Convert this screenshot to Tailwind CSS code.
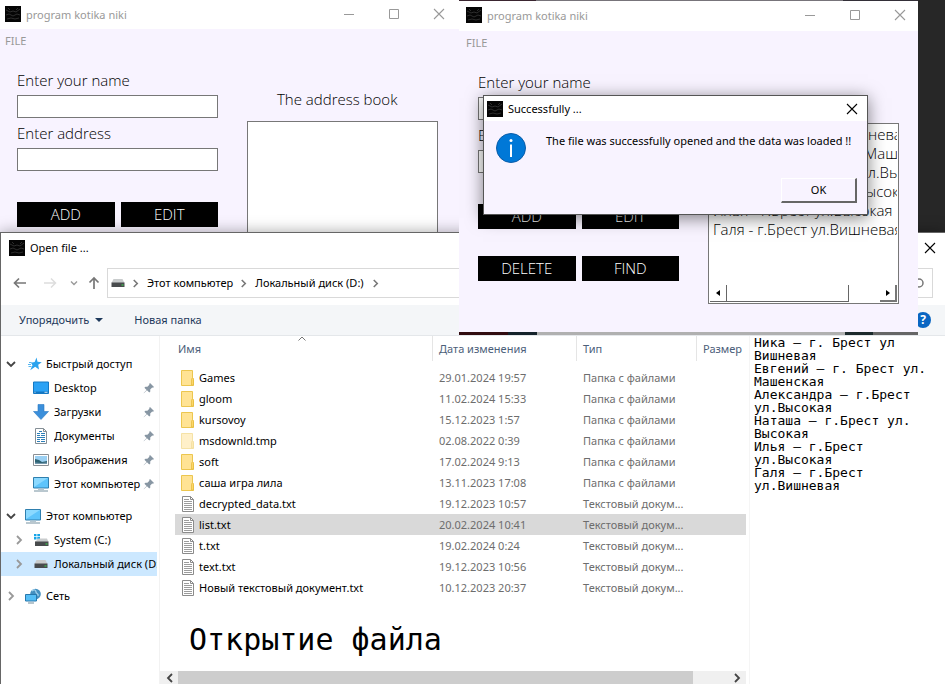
<!DOCTYPE html>
<html lang="ru">
<head>
<meta charset="utf-8">
<title>program kotika niki</title>
<script src="https://cdn.jsdelivr.net/npm/@tailwindcss/browser@4"></script>
</head>
<body class="font-['Noto_Sans','Open_Sans',sans-serif] text-[11px] leading-[16px] text-black">
<svg class="hidden">
  <symbol id="app" viewBox="0 0 16 16"><path fill="#050505" d="M0 0h16v16H0z"/><path d="M1 4l4 2 3-1 3 1 4-3M1 9l3-1 4 2 4-2 3 1M2 13l4-1 4 1 4-1M3 2l2 2m8-2l-2 2" stroke="#2e2e2e" fill="none"/></symbol>
  <symbol id="close" viewBox="0 0 12 12"><path d="M1 1l10 10M11 1L1 11" stroke="currentColor" stroke-width="1.1" fill="none"/></symbol>
  <symbol id="max" viewBox="0 0 12 12"><path d="M1.500 1.500h9v9h-9z" stroke="currentColor" fill="none"/></symbol>
  <symbol id="min" viewBox="0 0 12 12"><path d="M1 6.500h10" stroke="currentColor" fill="none"/></symbol>
  <symbol id="folder" viewBox="0 0 14 16"><path d="M.5.5h11v7l1 2v6h-12z" fill="#ffe394" stroke="#ecc64f"/><path d="M10.500 9.500c0-2 2-2 2 0v5.500h-2z" fill="#fdd768" stroke="#e3b93c" stroke-width=".7"/></symbol>
  <symbol id="doc" viewBox="0 0 14 16"><path d="M1.500.5h8l3 3v12h-11z" fill="#fff" stroke="#8b8b8b"/><path d="M9.500.5v3h3" fill="none" stroke="#8b8b8b"/><path d="M3 3.500h5M3 5.500h8M3 7.500h8M3 9.500h8M3 11.500h8M3 13.500h8" stroke="#9c9c9c"/></symbol>
  <symbol id="pin" viewBox="0 0 12 12"><path d="M7 1l4 4-1 .8-.8-.2-2 2 .1 2-1 1-2.300-2.300L.8 11.200.7 11 3.600 7.900 1.400 5.700l1-1 2 .1 2-2-.2-.8z" fill="#8796a3"/></symbol>
  <symbol id="right" viewBox="0 0 8 10"><path d="M2 1l4 4-4 4" stroke="currentColor" stroke-width="1.800" fill="none"/></symbol>
  <symbol id="down" viewBox="0 0 10 8"><path d="M1 2l4 4 4-4" stroke="currentColor" stroke-width="1.800" fill="none"/></symbol>
  <symbol id="star" viewBox="0 0 14 14"><path d="M8.500.5l1 4.200 4.300.5-3.600 2.500.8 4.800-3.800-2.800-5 3.600 2.300-5L3 5.800l3.700-.7z" fill="#2aa3ee"/><path d="M0 7.500h3M.5 9.500h3M1 5.500h2.500" stroke="#2aa3ee" stroke-width=".8"/></symbol>
  <symbol id="desk" viewBox="0 0 16 14"><path d="M.5 1h15v11.500H.5z" fill="#2ba2f5" stroke="#1479c4"/><path d="M1 10.500h14v1.500H1z" fill="#1276c2"/><path d="M1.500 11.300h1m9 0h3" stroke="#fff" stroke-width=".8"/></symbol>
  <symbol id="load" viewBox="0 0 16 16"><path d="M5 .5h6v7h4.500L8 15.500.5 7.500H5z" fill="#3b8fdb" stroke="#2a78c2" stroke-width=".6"/></symbol>
  <symbol id="docs" viewBox="0 0 14 16"><path d="M1.500.5h8l3 3v12h-11z" fill="#fff" stroke="#858f96"/><path d="M9.500.5v3h3" fill="none" stroke="#858f96"/><path d="M3 5.500h3m1 0h4M3 7.500h3m1 0h4M3 9.500h8M3 11.500h3m1 0h4M3 13.500h3m1 0h4M5 3.500h3" stroke="#2d7fb8"/></symbol>
  <symbol id="pics" viewBox="0 0 16 12"><path d="M.5.5h15v11H.5z" fill="#fff" stroke="#8b8f94"/><path d="M2 2h12v8H2z" fill="#9bd0f3"/><path d="M2 5l4 1 3 2 5-1v3H2z" fill="#2e6374"/><path d="M2 8.500l6 .5 6-.5V10H2z" fill="#7599ad"/></symbol>
  <symbol id="pc" viewBox="0 0 16 15"><path d="M.5.5h15v10.500H.5z" fill="#5ec4fb" stroke="#2f7fae"/><path d="M1 1h14L1 10z" fill="#8bd9ff"/><path d="M5 11.500h6v1.500H5z" fill="#b4c6d0"/><path d="M1 14h14" stroke="#75909f"/></symbol>
  <symbol id="disk" viewBox="0 0 14 10"><path d="M2.500 1h9l2 4H.5z" fill="#c9cccd"/><path d="M.5 4.500h13V9H.5z" fill="#484b4d"/><path d="M10.500 6.500h2v1h-2z" fill="#39e04c"/></symbol>
  <symbol id="sys" viewBox="0 0 16 14"><path d="M1 1h2.500v2.300H1zM4.300 1H7v2.300H4.300zM1 4h2.500v2.400H1zM4.300 4H7v2.400H4.300z" fill="#15a4e8"/><path d="M4 7l1-1.500h9L15.500 9H2z" fill="#c9cccd"/><path d="M2 8.500h13.500V13H2z" fill="#484b4d"/><path d="M12.500 10.500h2v1h-2z" fill="#39e04c"/></symbol>
  <symbol id="net" viewBox="0 0 16 16"><circle cx="10.500" cy="6" r="5.300" fill="#4590c0"/><path d="M7 3c2-2 4-1 4 1s3 1 2 4" stroke="#a5d4ee" fill="none" stroke-width="1.300"/><path d="M.5 6.500h11v6.500H.5z" fill="#55bef6" stroke="#2878ad"/><path d="M3 15h6" stroke="#6f8b9b"/></symbol>
</svg>

<main class="relative min-h-screen w-full overflow-hidden bg-[#272727]">

  <!-- Address book window, empty -->
  <section class="absolute left-0 top-0 w-[459px] h-[333px] bg-[#f8f3ff]">
    <header class="flex items-center h-[29px] pl-[5px] pr-[14px] bg-white text-[#999]">
      <svg class="size-4 mb-[2px]"><use href="#app"/></svg>
      <h1 class="pl-[5px] flex-1">program kotika niki</h1>
      <div class="flex gap-[33px] mb-[2px]">
        <button aria-label="Minimize"><svg class="size-3"><use href="#min"/></svg></button>
        <button aria-label="Maximize"><svg class="size-3"><use href="#max"/></svg></button>
        <button aria-label="Close"><svg class="size-3"><use href="#close"/></svg></button>
      </div>
    </header>
    <nav class="flex h-6 items-center px-[5px] text-[#999]"><button>FILE</button></nav>
    <div class="flex justify-between pl-[17px] pr-[21px] pt-3 font-['Open_Sans','Noto_Sans',sans-serif] font-light text-[15px] leading-[30px]">
      <form class="w-[201px] flex flex-col">
        <label for="n1">Enter your name</label>
        <input id="n1" class="h-[23px] w-full border border-[#777] bg-white px-1 text-[12px]">
        <label for="a1">Enter address</label>
        <input id="a1" class="h-[23px] w-full border border-[#777] bg-white px-1 text-[12px]">
        <div class="grid grid-cols-2 gap-x-[6px] gap-y-[27px] pt-[31px] text-white leading-[25px]">
          <button type="button" class="bg-black h-[25px]">ADD</button>
          <button type="button" class="bg-black h-[25px]">EDIT</button>
        </div>
      </form>
      <div class="w-[191px] pt-[19px]">
        <h2 class="pl-[30px] h-[37px]">The address book</h2>
        <div class="h-[181px] border border-[#777] bg-white"></div>
      </div>
    </div>
  </section>

  <!-- Open file dialog -->
  <section class="absolute inset-x-0 top-[232px] bottom-0 flex flex-col border-t border-l border-[#666] bg-white shadow-[0_0_14px_rgba(0,0,0,0.35)]">
    <header class="flex items-center h-[35px] pl-2 pr-[9px] pb-[6px]">
      <svg class="size-4"><use href="#app"/></svg>
      <h2 class="pl-[5px] flex-1">Open file ...</h2>
      <button aria-label="Close"><svg class="size-3"><use href="#close"/></svg></button>
    </header>
    <div class="flex items-center h-[30px] pl-3 pr-3">
      <button aria-label="Back"><svg class="w-[14px] h-3" viewBox="0 0 14 12"><path d="M13 6H1.500M6 1.500L1.500 6 6 10.500" stroke="#777" stroke-width="1.700" fill="none"/></svg></button>
      <button aria-label="Forward" class="ml-4"><svg class="w-[14px] h-3" viewBox="0 0 14 12"><path d="M1 6h11M8 1.500L12.500 6 8 10.500" stroke="#ddd" stroke-width="1.500" fill="none"/></svg></button>
      <button aria-label="Recent" class="ml-[13px] text-[#999]"><svg class="w-2 h-[6px]"><use href="#down"/></svg></button>
      <button aria-label="Up" class="ml-[10px]"><svg class="w-3 h-[14px]" viewBox="0 0 12 14"><path d="M6 13V2M1.500 6.500L6 2l4.500 4.500" stroke="#777" stroke-width="1.700" fill="none"/></svg></button>
      <div class="ml-[7px] flex flex-1 h-[30px] items-center border border-[#d9d9d9] pl-[3px]">
        <svg class="w-[14px] h-[10px]"><use href="#disk"/></svg>
        <svg class="w-[7px] h-[9px] ml-[7px] text-[#777]"><use href="#right"/></svg>
        <a href="#" class="ml-2">Этот компьютер</a>
        <svg class="w-[7px] h-[9px] ml-[7px] text-[#777]"><use href="#right"/></svg>
        <a href="#" class="ml-2">Локальный диск (D:)</a>
        <svg class="w-[7px] h-[9px] ml-2 text-[#777]"><use href="#right"/></svg>
        <svg class="ml-auto mr-2 size-[13px]" viewBox="0 0 13 13"><circle cx="8" cy="6" r="4" stroke="#777" stroke-width="1.500" fill="none"/><path d="M5 9l-4 4" stroke="#777" stroke-width="1.500"/></svg>
      </div>
    </div>
    <div class="mt-[7px] flex h-[31px] items-center gap-[31px] border-b border-[#e4e7ea] bg-[#f4f6f8] pl-[18px] pr-[14px] text-[#1e395b]">
      <button class="flex items-center gap-[6px]">Упорядочить <svg class="w-2 h-1" viewBox="0 0 8 4"><path d="M0 0h8L4 4z" fill="#1e395b"/></svg></button>
      <button>Новая папка</button>
      <button aria-label="Help" class="ml-auto size-4 rounded-full bg-[#0a66c2] text-white font-bold text-[12px] leading-[16px]">?</button>
    </div>

    <div class="flex flex-1">
      <nav class="w-[159px] border-r border-[#f2f2f2] pt-4">
        <ul class="pr-[2px] [&_a]:flex [&_a]:h-6 [&_a]:items-center [&_a]:whitespace-nowrap">
          <li><a href="#" class="pl-[5px]"><svg class="w-[10px] h-2 text-[#444] shrink-0"><use href="#down"/></svg><svg class="ml-3 size-[14px] shrink-0"><use href="#star"/></svg><span class="ml-1">Быстрый доступ</span></a></li>
          <li><a href="#" class="pl-8"><svg class="w-4 h-[14px] shrink-0"><use href="#desk"/></svg><span class="ml-[5px] w-[88px] overflow-hidden">Desktop</span><svg class="ml-px size-3 shrink-0"><use href="#pin"/></svg></a></li>
          <li><a href="#" class="pl-8"><svg class="size-4 shrink-0"><use href="#load"/></svg><span class="ml-[5px] w-[88px] overflow-hidden">Загрузки</span><svg class="ml-px size-3 shrink-0"><use href="#pin"/></svg></a></li>
          <li><a href="#" class="pl-8"><svg class="w-4 h-4 shrink-0"><use href="#docs"/></svg><span class="ml-[5px] w-[88px] overflow-hidden">Документы</span><svg class="ml-px size-3 shrink-0"><use href="#pin"/></svg></a></li>
          <li><a href="#" class="pl-8"><svg class="w-4 h-3 shrink-0"><use href="#pics"/></svg><span class="ml-[5px] w-[88px] overflow-hidden">Изображения</span><svg class="ml-px size-3 shrink-0"><use href="#pin"/></svg></a></li>
          <li><a href="#" class="pl-8"><svg class="w-4 h-[15px] shrink-0"><use href="#pc"/></svg><span class="ml-[5px] w-[88px] overflow-hidden">Этот компьютер</span><svg class="ml-px size-3 shrink-0"><use href="#pin"/></svg></a></li>
          <li class="pt-2"><a href="#" class="pl-[5px]"><svg class="w-[10px] h-2 text-[#444] shrink-0"><use href="#down"/></svg><svg class="ml-[9px] w-4 h-[15px] shrink-0"><use href="#pc"/></svg><span class="ml-[5px]">Этот компьютер</span></a></li>
          <li><a href="#" class="pl-[14px]"><svg class="w-2 h-[10px] text-[#999] shrink-0"><use href="#right"/></svg><svg class="ml-[10px] w-4 h-[14px] shrink-0"><use href="#sys"/></svg><span class="ml-[5px]">System (C:)</span></a></li>
          <li><a href="#" class="pl-[14px] bg-[#cce8ff] overflow-hidden"><svg class="w-2 h-[10px] text-[#999] shrink-0"><use href="#right"/></svg><svg class="ml-[11px] w-[14px] h-[10px] shrink-0"><use href="#disk"/></svg><span class="ml-[6px] w-[104px]">Локальный диск (D:)</span></a></li>
          <li class="pt-2"><a href="#" class="pl-[6px]"><svg class="w-2 h-[10px] text-[#999] shrink-0"><use href="#right"/></svg><svg class="ml-[10px] size-4 shrink-0"><use href="#net"/></svg><span class="ml-[5px]">Сеть</span></a></li>
        </ul>
      </nav>

      <div class="w-[586px] flex flex-col">
        <table class="ml-[15px] w-[571px] table-fixed border-collapse text-left text-[#6d6d6d] [&_tbody_tr]:h-[21px] [&_td]:p-0 [&_td]:pl-[7px] [&_td]:whitespace-nowrap [&_td]:overflow-hidden [&_th]:p-0 [&_th]:font-normal">
          <thead class="text-[#4c607a]">
            <tr class="h-[25px]">
              <th class="w-[257px]"><span class="relative block h-[25px] pl-[3px] leading-[25px]">Имя<svg class="absolute right-[126px] top-0 w-2 h-[5px]" viewBox="0 0 8 5"><path d="M.5 4.500L4 1l3.500 3.500" stroke="#777" fill="none"/></svg></span></th>
              <th class="w-36"><span class="block h-[25px] border-l border-[#e5e5e5] pl-[6px] leading-[25px]">Дата изменения</span></th>
              <th class="w-[120px]"><span class="block h-[25px] border-l border-[#e5e5e5] pl-[6px] leading-[25px]">Тип</span></th>
              <th><span class="block h-[25px] border-l border-[#e5e5e5] pl-[6px] leading-[25px]">Размер</span></th>
            </tr>
            <tr class="h-[6px]"></tr>
          </thead>
          <tbody>
            <tr><td><span class="flex items-center gap-1 text-black"><svg class="w-[14px] h-4 ml-[-1px]"><use href="#folder"/></svg>Games</span></td><td>29.01.2024 19:57</td><td>Папка с файлами</td><td></td></tr>
            <tr><td><span class="flex items-center gap-1 text-black"><svg class="w-[14px] h-4 ml-[-1px]"><use href="#folder"/></svg>gloom</span></td><td>11.02.2024 15:33</td><td>Папка с файлами</td><td></td></tr>
            <tr><td><span class="flex items-center gap-1 text-black"><svg class="w-[14px] h-4 ml-[-1px]"><use href="#folder"/></svg>kursovoy</span></td><td>15.12.2023 1:57</td><td>Папка с файлами</td><td></td></tr>
            <tr><td><span class="flex items-center gap-1 text-black"><svg class="w-[14px] h-4 ml-[-1px] opacity-50"><use href="#folder"/></svg>msdownld.tmp</span></td><td>02.08.2022 0:39</td><td>Папка с файлами</td><td></td></tr>
            <tr><td><span class="flex items-center gap-1 text-black"><svg class="w-[14px] h-4 ml-[-1px]"><use href="#folder"/></svg>soft</span></td><td>17.02.2024 9:13</td><td>Папка с файлами</td><td></td></tr>
            <tr><td><span class="flex items-center gap-1 text-black"><svg class="w-[14px] h-4 ml-[-1px]"><use href="#folder"/></svg>саша игра лила</span></td><td>13.11.2023 17:08</td><td>Папка с файлами</td><td></td></tr>
            <tr><td><span class="flex items-center gap-1 text-black"><svg class="w-[14px] h-4 ml-[-1px]"><use href="#doc"/></svg>decrypted_data.txt</span></td><td>19.12.2023 10:57</td><td>Текстовый докум...</td><td></td></tr>
            <tr class="bg-[#d9d9d9]"><td><span class="flex items-center gap-1 text-black"><svg class="w-[14px] h-4 ml-[-1px]"><use href="#doc"/></svg>list.txt</span></td><td>20.02.2024 10:41</td><td>Текстовый докум...</td><td></td></tr>
            <tr><td><span class="flex items-center gap-1 text-black"><svg class="w-[14px] h-4 ml-[-1px]"><use href="#doc"/></svg>t.txt</span></td><td>19.02.2024 0:24</td><td>Текстовый докум...</td><td></td></tr>
            <tr><td><span class="flex items-center gap-1 text-black"><svg class="w-[14px] h-4 ml-[-1px]"><use href="#doc"/></svg>text.txt</span></td><td>19.12.2023 10:56</td><td>Текстовый докум...</td><td></td></tr>
            <tr><td><span class="flex items-center gap-1 text-black"><svg class="w-[14px] h-4 ml-[-1px]"><use href="#doc"/></svg>Новый текстовый документ.txt</span></td><td>10.12.2023 20:37</td><td>Текстовый докум...</td><td></td></tr>
          </tbody>
        </table>
        <p class="pl-[29px] pt-6 font-['DejaVu_Sans_Mono',monospace] text-[30px] leading-[36px]">Открытие файла</p>
        <div class="mt-auto flex h-[13px] items-center justify-between bg-[#f0f0f0] pl-[6px] pr-[5px] text-[#444]">
          <svg class="w-2 h-[10px] rotate-180"><use href="#right"/></svg>
          <div class="h-full flex-1 ml-1 mr-[40px] bg-[#cdcdcd]"></div>
          <svg class="w-2 h-[10px]"><use href="#right"/></svg>
        </div>
      </div>

      <pre class="flex-1 ml-[3px] border-l border-[#f5f5f5] pl-1 font-['DejaVu_Sans_Mono',monospace] text-[13px] leading-[13px]">Ника – г. Брест ул
Вишневая
Евгений – г. Брест ул.
Машенская
Александра – г.Брест
ул.Высокая
Наташа – г.Брест ул.
Высокая
Илья – г.Брест
ул.Высокая
Галя – г.Брест
ул.Вишневая</pre>
    </div>
  </section>

  <!-- Address book window, loaded -->
  <section class="absolute left-[459px] top-0 w-[459px] h-[335px] flex flex-col bg-[#f8f3ff]">
    <div class="flex h-px shrink-0"><i class="w-[77px] bg-[#3a2530]"></i><i class="flex-1 bg-[#77747a]"></i><i class="w-[75px] bg-[#332f38]"></i></div>
    <header class="flex shrink-0 items-center h-[30px] pl-[7px] pr-3 bg-white text-[#999]">
      <svg class="size-4 mb-[2px]"><use href="#app"/></svg>
      <h1 class="pl-[5px] flex-1">program kotika niki</h1>
      <div class="flex gap-[33px] mb-[2px]">
        <button aria-label="Minimize"><svg class="size-3"><use href="#min"/></svg></button>
        <button aria-label="Maximize"><svg class="size-3"><use href="#max"/></svg></button>
        <button aria-label="Close"><svg class="size-3"><use href="#close"/></svg></button>
      </div>
    </header>
    <nav class="flex h-6 shrink-0 items-center px-[7px] text-[#999]"><button>FILE</button></nav>
    <div class="flex flex-1 justify-between pl-[19px] pr-[19px] pt-3 font-['Open_Sans','Noto_Sans',sans-serif] font-light text-[15px] leading-[30px]">
      <form class="w-[201px] flex flex-col">
        <label for="n2">Enter your name</label>
        <input id="n2" class="h-[23px] w-full border border-[#777] bg-white px-1 text-[12px]">
        <label for="a2">Enter address</label>
        <input id="a2" class="h-[23px] w-full border border-[#777] bg-white px-1 text-[12px]">
        <div class="grid grid-cols-2 gap-x-[6px] gap-y-[27px] pt-[31px] text-white leading-[25px]">
          <button type="button" class="bg-black h-[25px]">ADD</button>
          <button type="button" class="bg-black h-[25px]">EDIT</button>
          <button type="button" class="bg-black h-[25px]">DELETE</button>
          <button type="button" class="bg-black h-[25px]">FIND</button>
        </div>
      </form>
      <div class="w-[191px] pt-[19px]">
        <h2 class="pl-[30px] h-[37px]">The address book</h2>
        <div class="flex flex-col h-[181px] border border-[#777] bg-white p-px">
          <ul class="flex-1 overflow-hidden whitespace-nowrap pl-[3px] leading-[19px]">
            <li>Ника - г. Брест ул Вишневая</li>
            <li>Евгений - г. Брест ул. Машенская</li>
            <li>Александра - г.Брест ул.Высокая</li>
            <li>Наташа - г.Брест ул. Высокая</li>
            <li>Илья - г.Брест ул.Высокая</li>
            <li>Галя - г.Брест ул.Вишневая</li>
          </ul>
          <div class="flex h-[17px]">
            <button aria-label="Scroll left" class="w-[17px] border-r border-b border-[#666] grid place-items-center"><svg class="w-1 h-[6px]" viewBox="0 0 4 6"><path d="M4 0v6L0 3z"/></svg></button>
            <div class="w-[122px] border-r border-b border-[#666]"></div>
            <button aria-label="Scroll right" class="ml-auto w-[17px] border-r-2 border-b-2 border-[#777] grid place-items-center"><svg class="w-1 h-[6px]" viewBox="0 0 4 6"><path d="M0 0v6l4-3z"/></svg></button>
          </div>
        </div>
      </div>
    </div>
    <div class="flex h-[3px] shrink-0"><i class="w-[49px] bg-[#320c10]"></i><i class="w-[29px] bg-[#14222a]"></i><i class="flex-1 bg-[#b0b0b0]"></i><i class="w-7 bg-[#1c2a2c]"></i><i class="w-[45px] bg-[#666]"></i></div>
  </section>

  <!-- Message box -->
  <section role="dialog" aria-label="Successfully" class="absolute left-[483px] top-[95px] w-[385px] h-[120px] border border-[#555] bg-[#f8f3ff] shadow-[0_3px_16px_rgba(0,0,0,0.5)]">
    <header class="flex items-center h-[25px] bg-white pl-[3px] pr-[9px]">
      <svg class="size-4"><use href="#app"/></svg>
      <h2 class="pl-[5px] flex-1">Successfully ...</h2>
      <button aria-label="Close"><svg class="size-3"><use href="#close"/></svg></button>
    </header>
    <div class="flex pl-3 pt-3 gap-5">
      <svg class="size-[30px] shrink-0" viewBox="0 0 30 30"><circle cx="15" cy="15" r="14.500" fill="#0078d7" stroke="#0a5ca8"/><path d="M15 11.500V24" stroke="#fff" stroke-width="2"/><circle cx="15" cy="7.500" r="1.500" fill="#fff"/></svg>
      <p class="whitespace-nowrap">The file was successfully opened and the data was loaded !!</p>
    </div>
    <div class="flex justify-end pr-[10px] pt-[15px]">
      <button class="h-[25px] w-[76px] border-t border-l border-t-white border-l-white border-r-2 border-b-2 border-r-[#666] border-b-[#666]">OK</button>
    </div>
  </section>
</main>
</body>
</html>
